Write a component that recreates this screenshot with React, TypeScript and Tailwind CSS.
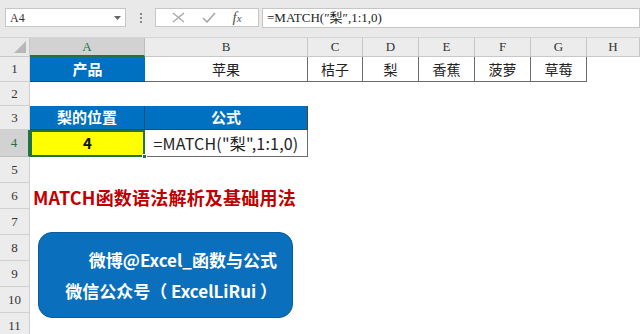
import React from "react";

const cols = ["A", "B", "C", "D", "E", "F", "G", "H"];
const rowHeights = [25, 24, 24, 27, 26, 26, 26, 26, 26, 26, 26];

const serif = { fontFamily: '"Liberation Serif", "Noto Sans CJK SC", serif' };
const yahei = { fontFamily: '"Noto Sans CJK SC", "Liberation Sans", sans-serif' };

type Cell = { text?: string; cls?: string };

const fruits = ["桔子", "梨", "香蕉", "菠萝", "草莓"];

const cellAt = (r: number, c: number): Cell => {
  const bordered = "border-r border-b border-[#6b6b6b]";
  if (r === 1) {
    if (c === 0) return { text: "产品", cls: "bg-[#0070c0] text-white font-bold text-[15px] border-b border-[#0a4f86]" };
    if (c === 1) return { text: "苹果", cls: `${bordered} text-[14px] text-[#222]` };
    if (c >= 2 && c <= 6) return { text: fruits[c - 2], cls: `${bordered} text-[14px] text-[#222]` };
  }
  if (r === 3) {
    if (c === 0) return { text: "梨的位置", cls: "bg-[#0070c0] text-white font-bold text-[15px] border-r border-b border-[#0a4f86]" };
    if (c === 1) return { text: "公式", cls: "bg-[#0070c0] text-white font-bold text-[15px] border-r border-b border-[#444]" };
  }
  if (r === 4) {
    if (c === 0) return { text: "4", cls: "bg-[#ffff00] text-[#111] font-bold text-[15px] border-2 border-[#217346] relative" };
    if (c === 1) return { text: '=MATCH("梨",1:1,0)', cls: `${bordered} text-[16px] text-[#222] tracking-[0.2px]` };
  }
  return {};
};

function FormulaBar() {
  return (
    <div className="h-[38px] bg-[#e9e9e9] flex items-start pt-2 pl-[5px] pr-0 gap-0 border-b border-[#d4d4d4]">
      <div className="w-[121px] h-[19px] bg-white border border-[#c6c6c6] flex items-center justify-between px-1" style={serif}>
        <span className="text-[12px] text-[#333]">A4</span>
        <svg width="7" height="4" viewBox="0 0 7 4"><path d="M0 0h7L3.5 4z" fill="#666" /></svg>
      </div>
      <div className="w-[29px] h-[19px] flex flex-col items-center justify-center gap-[2px]">
        <span className="w-[2px] h-[2px] bg-[#888]" />
        <span className="w-[2px] h-[2px] bg-[#888]" />
        <span className="w-[2px] h-[2px] bg-[#888]" />
      </div>
      <div className="w-[104px] h-[19px] bg-white border border-[#c6c6c6] flex items-center justify-around px-2">
        <svg width="13" height="11" viewBox="0 0 13 11"><path d="M1 1l11 9M12 1L1 10" stroke="#a8a8a8" strokeWidth="1.3" fill="none" /></svg>
        <svg width="14" height="11" viewBox="0 0 14 11"><path d="M1 6l4 4 8-9" stroke="#a8a8a8" strokeWidth="1.6" fill="none" /></svg>
        <span className="text-[15px] italic text-[#555]" style={serif}>f<span className="text-[11px]">x</span></span>
      </div>
      <div className="ml-[3px] flex-1 h-[20px] bg-white border border-[#c6c6c6] flex items-center pl-1">
        <span className="text-[13px] text-[#222]" style={serif}>=MATCH(″梨″,1:1,0)</span>
      </div>
    </div>
  );
}

export default function App() {
  return (
    <div className="w-[640px] h-[334px] overflow-hidden bg-white relative" style={yahei}>
      <FormulaBar />
      <div className="grid grid-cols-[30px_115px_163px_55px_56px_56px_56px_56px_53px]">
        <div className="h-[19px] bg-[#e9e9e9] border-r border-b border-[#c8c8c8] flex items-end justify-end pr-[3px] pb-[3px]">
          <svg width="12" height="12" viewBox="0 0 12 12"><path d="M12 0v12H0z" fill="#b8b8b8" /></svg>
        </div>
        {cols.map((c, i) => (
          <div
            key={c}
            className={`h-[19px] flex items-center justify-center text-[13px] border-r border-b ${i === 0 ? "bg-[#d2d2d2] text-[#217346] border-[#bdbdbd] border-b-[#217346] border-b-2" : "bg-[#ececec] text-[#333] border-[#c8c8c8]"}`}
            style={serif}
          >
            {c}
          </div>
        ))}
        {rowHeights.map((h, ri) => {
          const r = ri + 1;
          return (
            <React.Fragment key={r}>
              <div
                className={`flex items-center justify-center text-[13px] border-r border-b ${r === 4 ? "bg-[#d2d2d2] text-[#217346] border-[#bdbdbd] border-r-[#217346] border-r-2" : "bg-[#ececec] text-[#333] border-[#d0d0d0]"}`}
                style={{ ...serif, height: h }}
              >
                {r}
              </div>
              {cols.map((_, ci) => {
                const cell = cellAt(r, ci);
                return (
                  <div key={ci} className={`flex items-center justify-center whitespace-nowrap ${cell.cls ?? ""}`} style={{ height: h }}>
                    {cell.text}
                    {r === 4 && ci === 0 && (
                      <span className="absolute right-[-4px] bottom-[-4px] w-[5px] h-[5px] bg-[#217346] border border-white" />
                    )}
                  </div>
                );
              })}
            </React.Fragment>
          );
        })}
      </div>
      <div className="absolute left-[33px] top-[184px] text-[18px] font-bold text-[#c00000] whitespace-nowrap tracking-[0.2px]">
        MATCH函数语法解析及基础用法
      </div>
      <div className="absolute left-[38px] top-[232px] w-[255px] h-[86px] rounded-[14px] bg-[#0a6fbd] border border-[#0b5a9a] flex flex-col items-end justify-center gap-[6px] pr-[15px] text-white font-bold text-[17px] whitespace-nowrap">
        <div>微博@Excel_函数与公式</div>
        <div>微信公众号（ ExcelLiRui ）</div>
      </div>
    </div>
  );
}
